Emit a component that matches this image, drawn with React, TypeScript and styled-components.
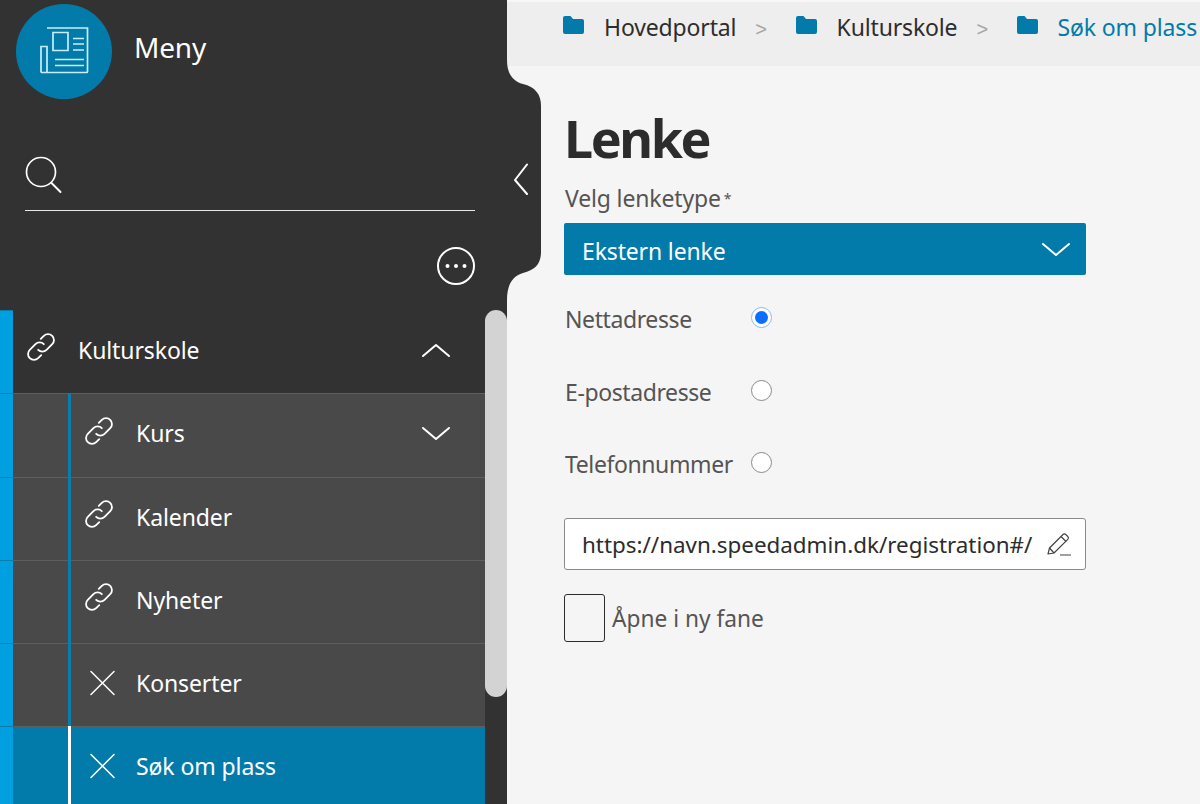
import React from "react";
import styled, { createGlobalStyle } from "styled-components";

const Global = createGlobalStyle`
  html, body { margin: 0; padding: 0; background: #f5f5f5; }
  body { font-family: "Noto Sans", "Open Sans", sans-serif; overflow: hidden; }
  * { box-sizing: border-box; }
`;

const Page = styled.div`
  display: flex;
  width: 1200px;
  height: 804px;
  overflow: hidden;
`;

const Sidebar = styled.aside`
  position: relative;
  flex: 0 0 507px;
  height: 804px;
  background: #333232;
  color: #fff;
  display: flex;
  flex-direction: column;
`;

const Bulge = styled.svg`
  position: absolute;
  left: 507px;
  top: 60px;
  width: 36px;
  height: 240px;
`;

const CollapseIcon = styled.svg`
  position: absolute;
  left: 512px;
  top: 163px;
  width: 18px;
  height: 32px;
`;

const Brand = styled.div`
  display: flex;
  align-items: center;
  gap: 23px;
  height: 98px;
  padding: 4px 0 0 16px;
`;

const Logo = styled.div`
  width: 96px;
  height: 95px;
  border-radius: 50%;
  background: #027bab;
  display: flex;
  align-items: center;
  justify-content: center;
`;

const BrandName = styled.div`
  font-size: 28px;
  letter-spacing: -0.2px;
  line-height: 34px;
  margin: -9px 0 0 -1px;
`;

const Search = styled.div`
  margin: 58px 32px 0 25px;
  height: 54.5px;
  border-bottom: 1.5px solid #e8e8e8;
`;

const MoreRow = styled.div`
  display: flex;
  justify-content: flex-end;
  height: 99.5px;
  padding: 36px 32px 0 0;
`;

const Menu = styled.div`
  display: flex;
  flex: 1;
  min-height: 0;
  overflow: hidden;
`;

const MenuList = styled.div`
  flex: 0 0 485px;
  display: flex;
  flex-direction: column;
`;

const ScrollTrack = styled.div`
  flex: 0 0 22px;
`;

const ScrollThumb = styled.div`
  height: 387px;
  background: #d3d3d3;
  border-radius: 11px;
`;

const Row = styled.div<{ $variant: "top" | "sub" | "active"; $h: number }>`
  display: flex;
  flex: 0 0 auto;
  align-items: stretch;
  height: ${(p) => p.$h}px;
  background: ${(p) => (p.$variant === "top" ? "#333232" : p.$variant === "sub" ? "#4a4949" : "#027bab")};
  box-shadow: ${(p) => (p.$variant === "top" ? "none" : "inset 0 1px 0 #5f5e5e")};
`;

const Strip = styled.div`
  flex: 0 0 13px;
  background: #00a0e0;
  box-shadow: inset 0 1px 0 #0a7dad;
`;

const Indent = styled.div`
  flex: 0 0 55px;
`;

const Rule = styled.div<{ $active?: boolean }>`
  flex: 0 0 3px;
  background: ${(p) => (p.$active ? "#ffffff" : "#0a7dad")};
`;

const RowBody = styled.div`
  flex: 1;
  display: flex;
  align-items: center;
  padding: 0 34px 4px 14px;
  min-width: 0;
`;

const IconSlot = styled.div`
  flex: 0 0 51px;
  display: flex;
  align-items: center;
`;

const LinkSvg = styled.svg`
  width: 34px;
  height: 34px;
  margin: -5px -4px 0 -3px;
`;

const RowLabel = styled.div`
  flex: 1;
  font-size: 23px;
  letter-spacing: -0.1px;
  line-height: 30px;
`;

const Main = styled.main`
  flex: 1;
  min-width: 0;
  display: flex;
  flex-direction: column;
  background: #f5f5f5;
`;

const Crumbs = styled.nav`
  height: 66px;
  background: #eeeeee;
  border-top: 2px solid #f7f7f7;
  display: flex;
  align-items: flex-start;
  padding: 10px 0 0 56px;
  white-space: nowrap;
  overflow: hidden;
`;

const Crumb = styled.span<{ $current?: boolean }>`
  font-size: 23px;
  letter-spacing: -0.15px;
  line-height: 30px;
  margin-left: 20px;
  color: ${(p) => (p.$current ? "#027bab" : "#2e2d2d")};
`;

const Sep = styled.span`
  font-size: 20px;
  line-height: 34px;
  color: #a5a5a5;
  margin: 0 28.5px 0 19px;
  font-family: "Liberation Sans", sans-serif;
`;

const FolderIcon = styled.svg`
  flex: 0 0 21px;
  width: 21px;
  height: 18px;
  margin-top: 4px;
`;

const Content = styled.div`
  width: 579px;
  padding: 0 0 0 57px;
  display: flex;
  flex-direction: column;
`;

const Title = styled.h1`
  margin: 36px 0 0;
  font-size: 52px;
  line-height: 72px;
  font-weight: 700;
  letter-spacing: -2.4px;
  color: #2c2c2c;
`;

const FieldLabel = styled.label`
  font-size: 23px;
  letter-spacing: -0.15px;
  line-height: 30px;
  color: #555454;
  margin: 9px 0 0 1px;
  padding-bottom: 1px;
`;

const Star = styled.sup`
  font-size: 14px;
  line-height: 0;
  margin-left: 3px;
  vertical-align: 3px;
`;

const Select = styled.div`
  margin-top: 9px;
  height: 52px;
  background: #027bab;
  border-radius: 2px;
  color: #fff;
  display: flex;
  align-items: center;
  justify-content: space-between;
  padding: 0 15px 0 18px;
  font-size: 23px;
  letter-spacing: -0.15px;
`;

const SelectText = styled.span`
  margin-top: 3px;
`;

const RadioGroup = styled.div`
  display: flex;
  flex-direction: column;
  margin-top: 8px;
`;

const RadioRow = styled.div`
  display: flex;
  align-items: center;
  height: 72.7px;
`;

const RadioLabel = styled.span`
  flex: 0 0 187px;
  padding-left: 1px;
  font-size: 23px;
  letter-spacing: -0.4px;
  line-height: 30px;
  color: #555454;
  margin-top: -1px;
`;

const Radio = styled.span<{ $checked?: boolean }>`
  width: 21px;
  height: 21px;
  margin-top: -4px;
  border-radius: 50%;
  background: #fff;
  border: 1px solid ${(p) => (p.$checked ? "#8db8f0" : "#8a8a8a")};
  display: flex;
  align-items: center;
  justify-content: center;
  &::after {
    content: "";
    display: ${(p) => (p.$checked ? "block" : "none")};
    width: 13px;
    height: 13px;
    border-radius: 50%;
    background: #0d6efd;
  }
`;

const UrlField = styled.div`
  margin-top: 17px;
  height: 52px;
  background: #fff;
  border: 1px solid #8a8a8a;
  border-radius: 3px;
  display: flex;
  align-items: center;
  justify-content: space-between;
  padding: 0 13px 0 17px;
  font-size: 22.4px;
  color: #2c2c2c;
  white-space: nowrap;
`;

const CheckRow = styled.div`
  margin-top: 24px;
  display: flex;
  align-items: center;
  gap: 7px;
`;

const CheckBox = styled.span`
  width: 41px;
  height: 48px;
  border: 1.5px solid #2c2c2c;
  border-radius: 3px;
`;

const CheckLabel = styled.span`
  font-size: 22.7px;
  color: #555454;
`;

const stroke = { fill: "none", stroke: "currentColor", strokeLinecap: "round", strokeLinejoin: "round" } as const;

const LinkGlyph = () => (
  <LinkSvg viewBox="0 0 30 30" {...stroke} strokeWidth={1.6}>
    <path d="M12.5 17.5a5.2 5.2 0 0 0 7.4 0l5-5a5.2 5.2 0 0 0-7.4-7.4l-2.7 2.7" />
    <path d="M17.5 12.5a5.2 5.2 0 0 0-7.4 0l-5 5a5.2 5.2 0 0 0 7.4 7.4l2.7-2.7" />
  </LinkSvg>
);

const CloseGlyph = () => (
  <svg width="30" height="30" viewBox="0 0 30 30" {...stroke} strokeWidth={1.5}>
    <path d="M6 3.5l23 23M29 3.5l-23 23" />
  </svg>
);

const Chevron = ({ up }: { up?: boolean }) => (
  <svg width="30" height="16" viewBox="0 0 30 16" {...stroke} strokeWidth={2}>
    <path d={up ? "M2 14L15 3l13 11" : "M2 3l13 11L28 3"} />
  </svg>
);

const Folder = () => (
  <FolderIcon viewBox="0 0 21 18">
    <path fill="#027bab" d="M0 2a2 2 0 0 1 2-2h5.5l2.5 3h9a2 2 0 0 1 2 2v11a2 2 0 0 1-2 2H2a2 2 0 0 1-2-2z" />
  </FolderIcon>
);

const Newspaper = () => (
  <svg width="50" height="48" viewBox="0 0 50 48" fill="none" stroke="#c9eef8" strokeWidth={1.7}>
    <path d="M8 1h40.5v43.5a1 1 0 0 1-1 1H3a1 1 0 0 1-1-1V19.5h6V45.5" />
    <path d="M14 5.5h15v18H14z" />
    <path d="M34 11.5h11M34 17h11M34 23h11M16 32.5h29M16 38.5h29" />
  </svg>
);

const items: { label: string; icon: "link" | "x"; chevron?: boolean; active?: boolean; h: number }[] = [
  { label: "Kurs", icon: "link", chevron: true, h: 84 },
  { label: "Kalender", icon: "link", h: 83 },
  { label: "Nyheter", icon: "link", h: 83 },
  { label: "Konserter", icon: "x", h: 83 },
  { label: "Søk om plass", icon: "x", active: true, h: 83 },
];

export default function App() {
  return (
    <Page>
      <Global />
      <Sidebar>
        <Brand>
          <Logo>
            <Newspaper />
          </Logo>
          <BrandName>Meny</BrandName>
        </Brand>
        <Search>
          <svg width="38" height="38" viewBox="0 0 38 38" {...stroke} strokeWidth={1.7}>
            <circle cx="16" cy="16" r="14.5" />
            <path d="M26.5 27l9 9" strokeWidth={2} />
          </svg>
        </Search>
        <MoreRow>
          <svg width="38" height="38" viewBox="0 0 38 38" fill="none">
            <circle cx="19" cy="19" r="18" stroke="#fff" strokeWidth={2} />
            <circle cx="10.5" cy="19" r="2" fill="#fff" />
            <circle cx="19" cy="19" r="2" fill="#fff" />
            <circle cx="27.5" cy="19" r="2" fill="#fff" />
          </svg>
        </MoreRow>
        <Menu>
          <MenuList>
            <Row $variant="top" $h={83}>
              <Strip />
              <RowBody>
                <IconSlot>
                  <LinkGlyph />
                </IconSlot>
                <RowLabel>Kulturskole</RowLabel>
                <Chevron up />
              </RowBody>
            </Row>
            {items.map((it) => (
              <Row key={it.label} $variant={it.active ? "active" : "sub"} $h={it.h}>
                <Strip />
                <Indent />
                <Rule $active={it.active} />
                <RowBody>
                  <IconSlot>{it.icon === "link" ? <LinkGlyph /> : <CloseGlyph />}</IconSlot>
                  <RowLabel>{it.label}</RowLabel>
                  {it.chevron && <Chevron />}
                </RowBody>
              </Row>
            ))}
          </MenuList>
          <ScrollTrack>
            <ScrollThumb />
          </ScrollTrack>
        </Menu>
        <Bulge viewBox="0 0 36 240">
          <path
            fill="#333232"
            d="M0 0C0 14 6 21 16 24C28 27 34 34 34 46V192C34 204 28 210 16 213C6 216 0 224 0 240Z"
          />
        </Bulge>
        <CollapseIcon viewBox="0 0 18 32" {...stroke} strokeWidth={2} color="#fff">
          <path d="M15 1.5L3 17l12 14" />
        </CollapseIcon>
      </Sidebar>
      <Main>
        <Crumbs>
          <Folder />
          <Crumb>Hovedportal</Crumb>
          <Sep>&gt;</Sep>
          <Folder />
          <Crumb>Kulturskole</Crumb>
          <Sep>&gt;</Sep>
          <Folder />
          <Crumb $current>Søk om plass</Crumb>
        </Crumbs>
        <Content>
          <Title>Lenke</Title>
          <FieldLabel>
            Velg lenketype<Star>*</Star>
          </FieldLabel>
          <Select>
            <SelectText>Ekstern lenke</SelectText>
            <Chevron />
          </Select>
          <RadioGroup>
            <RadioRow>
              <RadioLabel>Nettadresse</RadioLabel>
              <Radio $checked />
            </RadioRow>
            <RadioRow>
              <RadioLabel>E-postadresse</RadioLabel>
              <Radio />
            </RadioRow>
            <RadioRow>
              <RadioLabel>Telefonnummer</RadioLabel>
              <Radio />
            </RadioRow>
          </RadioGroup>
          <UrlField>
            https://navn.speedadmin.dk/registration#/
            <svg width="26" height="26" viewBox="0 0 26 26" fill="none" stroke="#444" strokeWidth={1.2} strokeLinejoin="round">
              <path d="M2 23l1.5-6L17 3.5a2 2 0 0 1 2.8 0l2 2a2 2 0 0 1 0 2.8L8 22z" />
              <path d="M15 5.5l5 5M3.5 17L8 22M14 24h11" />
            </svg>
          </UrlField>
          <CheckRow>
            <CheckBox />
            <CheckLabel>Åpne i ny fane</CheckLabel>
          </CheckRow>
        </Content>
      </Main>
    </Page>
  );
}
